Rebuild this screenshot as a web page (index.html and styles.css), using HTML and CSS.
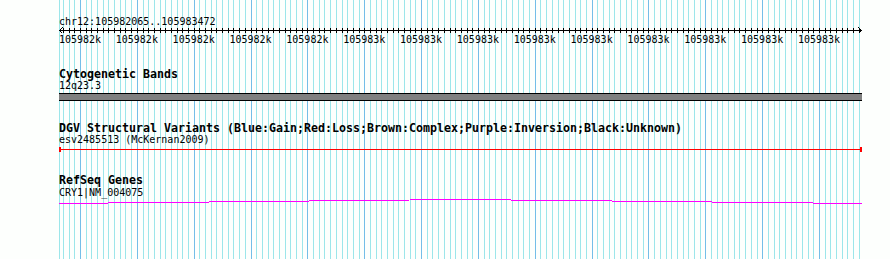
FILE: index.html
```html
<!DOCTYPE html>
<html lang="en">
<head>
  <meta charset="UTF-8" />
  <title>Genome Browser Detail</title>
  <link rel="stylesheet" href="styles.css">
</head>
<body>

  <div class="panel">
    <div class="ref">chr12:105982065..105983472</div>

    <!-- ruler with arrowheads -->
    <div class="ruler">
      <svg class="arrow" width="4" height="7" viewBox="0 0 4 7"><polyline points="3.5,0.5 0.5,3.5 3.5,6.5" /></svg>
      <svg class="arrow" width="4" height="7" viewBox="0 0 4 7"><polyline points="0.5,0.5 3.5,3.5 0.5,6.5" /></svg>
    </div>

    <div class="scale">
      <span>105982k</span><span>105982k</span><span>105982k</span><span>105982k</span><span>105982k</span>
      <span>105983k</span><span>105983k</span><span>105983k</span><span>105983k</span><span>105983k</span>
      <span>105983k</span><span>105983k</span><span>105983k</span><span>105983k</span>
    </div>

    <!-- tracks -->
    <section class="track">
      <h2 class="track-title">Cytogenetic Bands</h2>
      <div class="track-label">12q23.3</div>
      <div class="band"></div>
    </section>

    <section class="track dgv">
      <h2 class="track-title">DGV Structural Variants (Blue:Gain;Red:Loss;Brown:Complex;Purple:Inversion;Black:Unknown)</h2>
      <div class="track-label">esv2485513 (McKernan2009)</div>
      <div class="variant"></div>
    </section>

    <section class="track genes">
      <h2 class="track-title">RefSeq Genes</h2>
      <div class="track-label">CRY1|NM_004075</div>
      <svg class="intron" width="803" height="5" viewBox="0 0 803 5"><polyline points="0,4.5 401,0.5 803,4.5" /></svg>
    </section>
  </div>

</body>
</html>
```

FILE: styles.css
```css
* { box-sizing: border-box; margin: 0; padding: 0; }
body { background: #fdfffd; font-family: 'DejaVu Sans Mono', monospace; font-size: 10px; color: #000; overflow: hidden; }

/* grid: edge line, major every 100bp, minor every 10bp */
.panel {
  margin-left: 59px;
  width: 803px;
  height: 259px;
  padding-top: 15px;
  background:
    linear-gradient(#9ce6ea, #9ce6ea) 0 0 / 1px 100% no-repeat,
    repeating-linear-gradient(to right, transparent 0 21px, #74bee8 21px 22px, transparent 22px 56.85px),
    repeating-linear-gradient(to right, transparent 0 3.945px, #9ce6ea 3.945px 4.945px, transparent 4.945px 5.685px);
}

.ref { line-height: 13px; }

.ruler {
  height: 7px;
  margin-top: -1px;
  display: flex;
  justify-content: space-between;
  background:
    linear-gradient(#000, #000) 0 3px / 100% 1px no-repeat,
    repeating-linear-gradient(to right, transparent 0 3.945px, #000 3.945px 4.945px, transparent 4.945px 5.685px) 0 1px / 100% 5px no-repeat;
}
.arrow { display: block; }
.arrow polyline { fill: none; stroke: #000; stroke-width: 1; shape-rendering: crispEdges; }

.scale { display: flex; margin-left: -7.425px; margin-top: -1px; line-height: 13px; }
.scale span { flex: 0 0 56.85px; text-align: center; }

.track { margin-top: 22px; }
.track.dgv { margin-top: 21px; }
.track-title { font-size: 11.63px; font-weight: bold; line-height: 12px; white-space: nowrap; }
.track-label { line-height: 12px; }
.genes .track-label { margin-top: 1px; }

.band { height: 8px; margin-top: 1px; background: #808080; border-top: 1px solid #000; border-bottom: 1px solid #000; }

.variant {
  height: 5px;
  margin-top: 1px;
  border-left: 2px solid #f00;
  border-right: 2px solid #f00;
  background: linear-gradient(#f00, #f00) 0 2px / 100% 1px no-repeat;
}

.intron { display: block; }
.intron polyline { fill: none; stroke: #f0f; stroke-width: 1; shape-rendering: crispEdges; }
```
